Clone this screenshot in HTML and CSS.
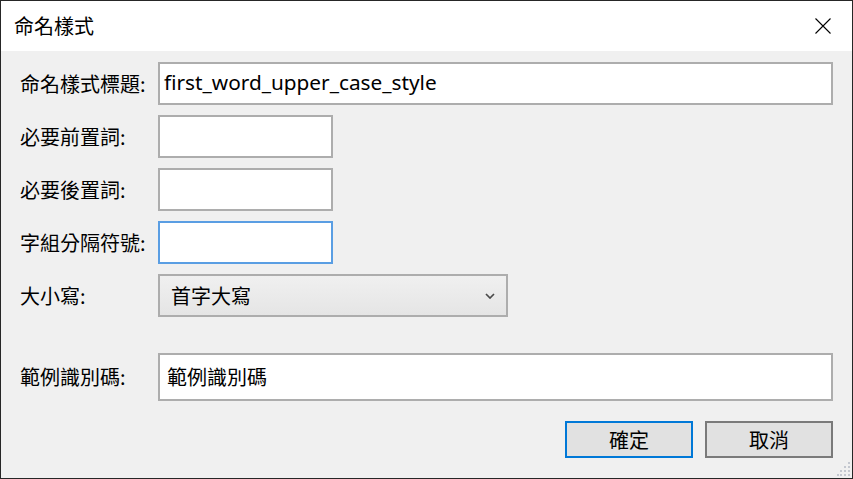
FILE: index.html
```html
<!DOCTYPE html>
<html lang="zh-Hant">
<head>
<meta charset="utf-8">
<title>命名樣式</title>
<link rel="stylesheet" href="styles.css">
</head>
<body>
<div class="window">
  <div class="titlebar">
    <span class="title">命名樣式</span>
    <span class="close" aria-label="close">
      <svg width="16" height="16" viewBox="0 0 16 16"><path d="M0.5 0.5 L15.5 15.5 M15.5 0.5 L0.5 15.5" stroke="#000" stroke-width="1.1" fill="none"/></svg>
    </span>
  </div>
  <div class="content">
    <div class="row">
      <label class="label">命名樣式標題:</label>
      <div class="field wide"><span class="latin">first_word_upper_case_style</span></div>
    </div>
    <div class="row">
      <label class="label">必要前置詞:</label>
      <div class="field short"></div>
    </div>
    <div class="row">
      <label class="label">必要後置詞:</label>
      <div class="field short"></div>
    </div>
    <div class="row">
      <label class="label">字組分隔符號:</label>
      <div class="field short focused"></div>
    </div>
    <div class="row">
      <label class="label">大小寫:</label>
      <div class="select">
        <span>首字大寫</span>
        <svg class="chev" width="10" height="6" viewBox="0 0 10 6"><path d="M1 1 L5 5 L9 1" stroke="#4a4a4a" stroke-width="1.7" fill="none"/></svg>
      </div>
    </div>
    <div class="row sample">
      <label class="label">範例識別碼:</label>
      <div class="field wide tall"><span>範例識別碼</span></div>
    </div>
    <div class="buttons">
      <div class="btn primary">確定</div>
      <div class="btn">取消</div>
    </div>
    <div class="grip">
      <svg width="14" height="16" viewBox="0 0 14 16">
        <g fill="#c4c8d0">
          <rect x="11" y="1" width="2" height="2"/>
          <rect x="11" y="5" width="2" height="2"/><rect x="7" y="5" width="2" height="2"/>
          <rect x="11" y="9" width="2" height="2"/><rect x="7" y="9" width="2" height="2"/><rect x="3" y="9" width="2" height="2"/>
          <rect x="11" y="13" width="2" height="2"/><rect x="7" y="13" width="2" height="2"/><rect x="3" y="13" width="2" height="2"/><rect x="0" y="13" width="2" height="2"/>
        </g>
      </svg>
    </div>
  </div>
</div>
</body>
</html>
```
FILE: styles.css
```css
* { box-sizing: border-box; }
html, body {
  margin: 0;
  padding: 0;
  background: #f0f0f0;
}
body {
  font-family: "Noto Sans", "Noto Sans CJK TC", sans-serif;
  font-size: 20px;
  color: #000;
}
.window {
  width: 853px;
  height: 479px;
  border: 1px solid #262626;
  display: flex;
  flex-direction: column;
  background: #f0f0f0;
}
.titlebar {
  height: 50px;
  flex: none;
  background: #fff;
  display: flex;
  align-items: center;
  justify-content: space-between;
  padding: 0 21px 0 13px;
}
.title {
  font-family: "Noto Sans CJK TC", sans-serif;
  font-size: 20px;
  line-height: 1;
}
.close {
  display: flex;
  width: 16px;
  height: 16px;
}
.content {
  flex: 1;
  display: flex;
  flex-direction: column;
  padding: 11px 19px 0 19px;
  position: relative;
}
.row {
  display: flex;
  align-items: center;
  height: 43px;
  margin-bottom: 10px;
}
.row.sample {
  height: 48px;
  margin-top: 26px;
  margin-bottom: 20px;
}
.label {
  width: 138px;
  flex: none;
  font-family: "Noto Sans CJK TC", sans-serif;
  font-size: 20px;
  line-height: 1;
  white-space: nowrap;
}
.field {
  height: 43px;
  border: 2px solid #adadad;
  background: #fff;
  display: flex;
  align-items: center;
  padding-left: 4px;
  font-size: 20px;
  line-height: 1;
}
.field.wide { flex: 1; }
.field.short { width: 175px; }
.field.tall { height: 48px; padding-left: 7px; }
.field.tall span { font-family: "Noto Sans CJK TC", sans-serif; }
.field.focused { border-color: #5a9ee3; }
.latin {
  font-family: "Noto Sans", sans-serif;
  font-size: 20.8px;
  padding-bottom: 2px;
}
.select {
  width: 350px;
  height: 43px;
  border: 2px solid #adadad;
  background: linear-gradient(#f0f0f0, #e5e5e5);
  display: flex;
  align-items: center;
  justify-content: space-between;
  padding: 0 11px 0 11px;
  font-family: "Noto Sans CJK TC", sans-serif;
  line-height: 1;
}
.chev { display: block; }
.buttons {
  display: flex;
  justify-content: flex-end;
  gap: 12px;
}
.btn {
  width: 128px;
  height: 37px;
  border: 2px solid #7a7a7a;
  background: #e1e1e1;
  display: flex;
  align-items: center;
  justify-content: center;
  font-family: "Noto Sans CJK TC", sans-serif;
  line-height: 1;
}
.btn.primary { border-color: #0078d7; }
.grip {
  position: absolute;
  right: 1px;
  bottom: 1px;
  line-height: 0;
}
```
